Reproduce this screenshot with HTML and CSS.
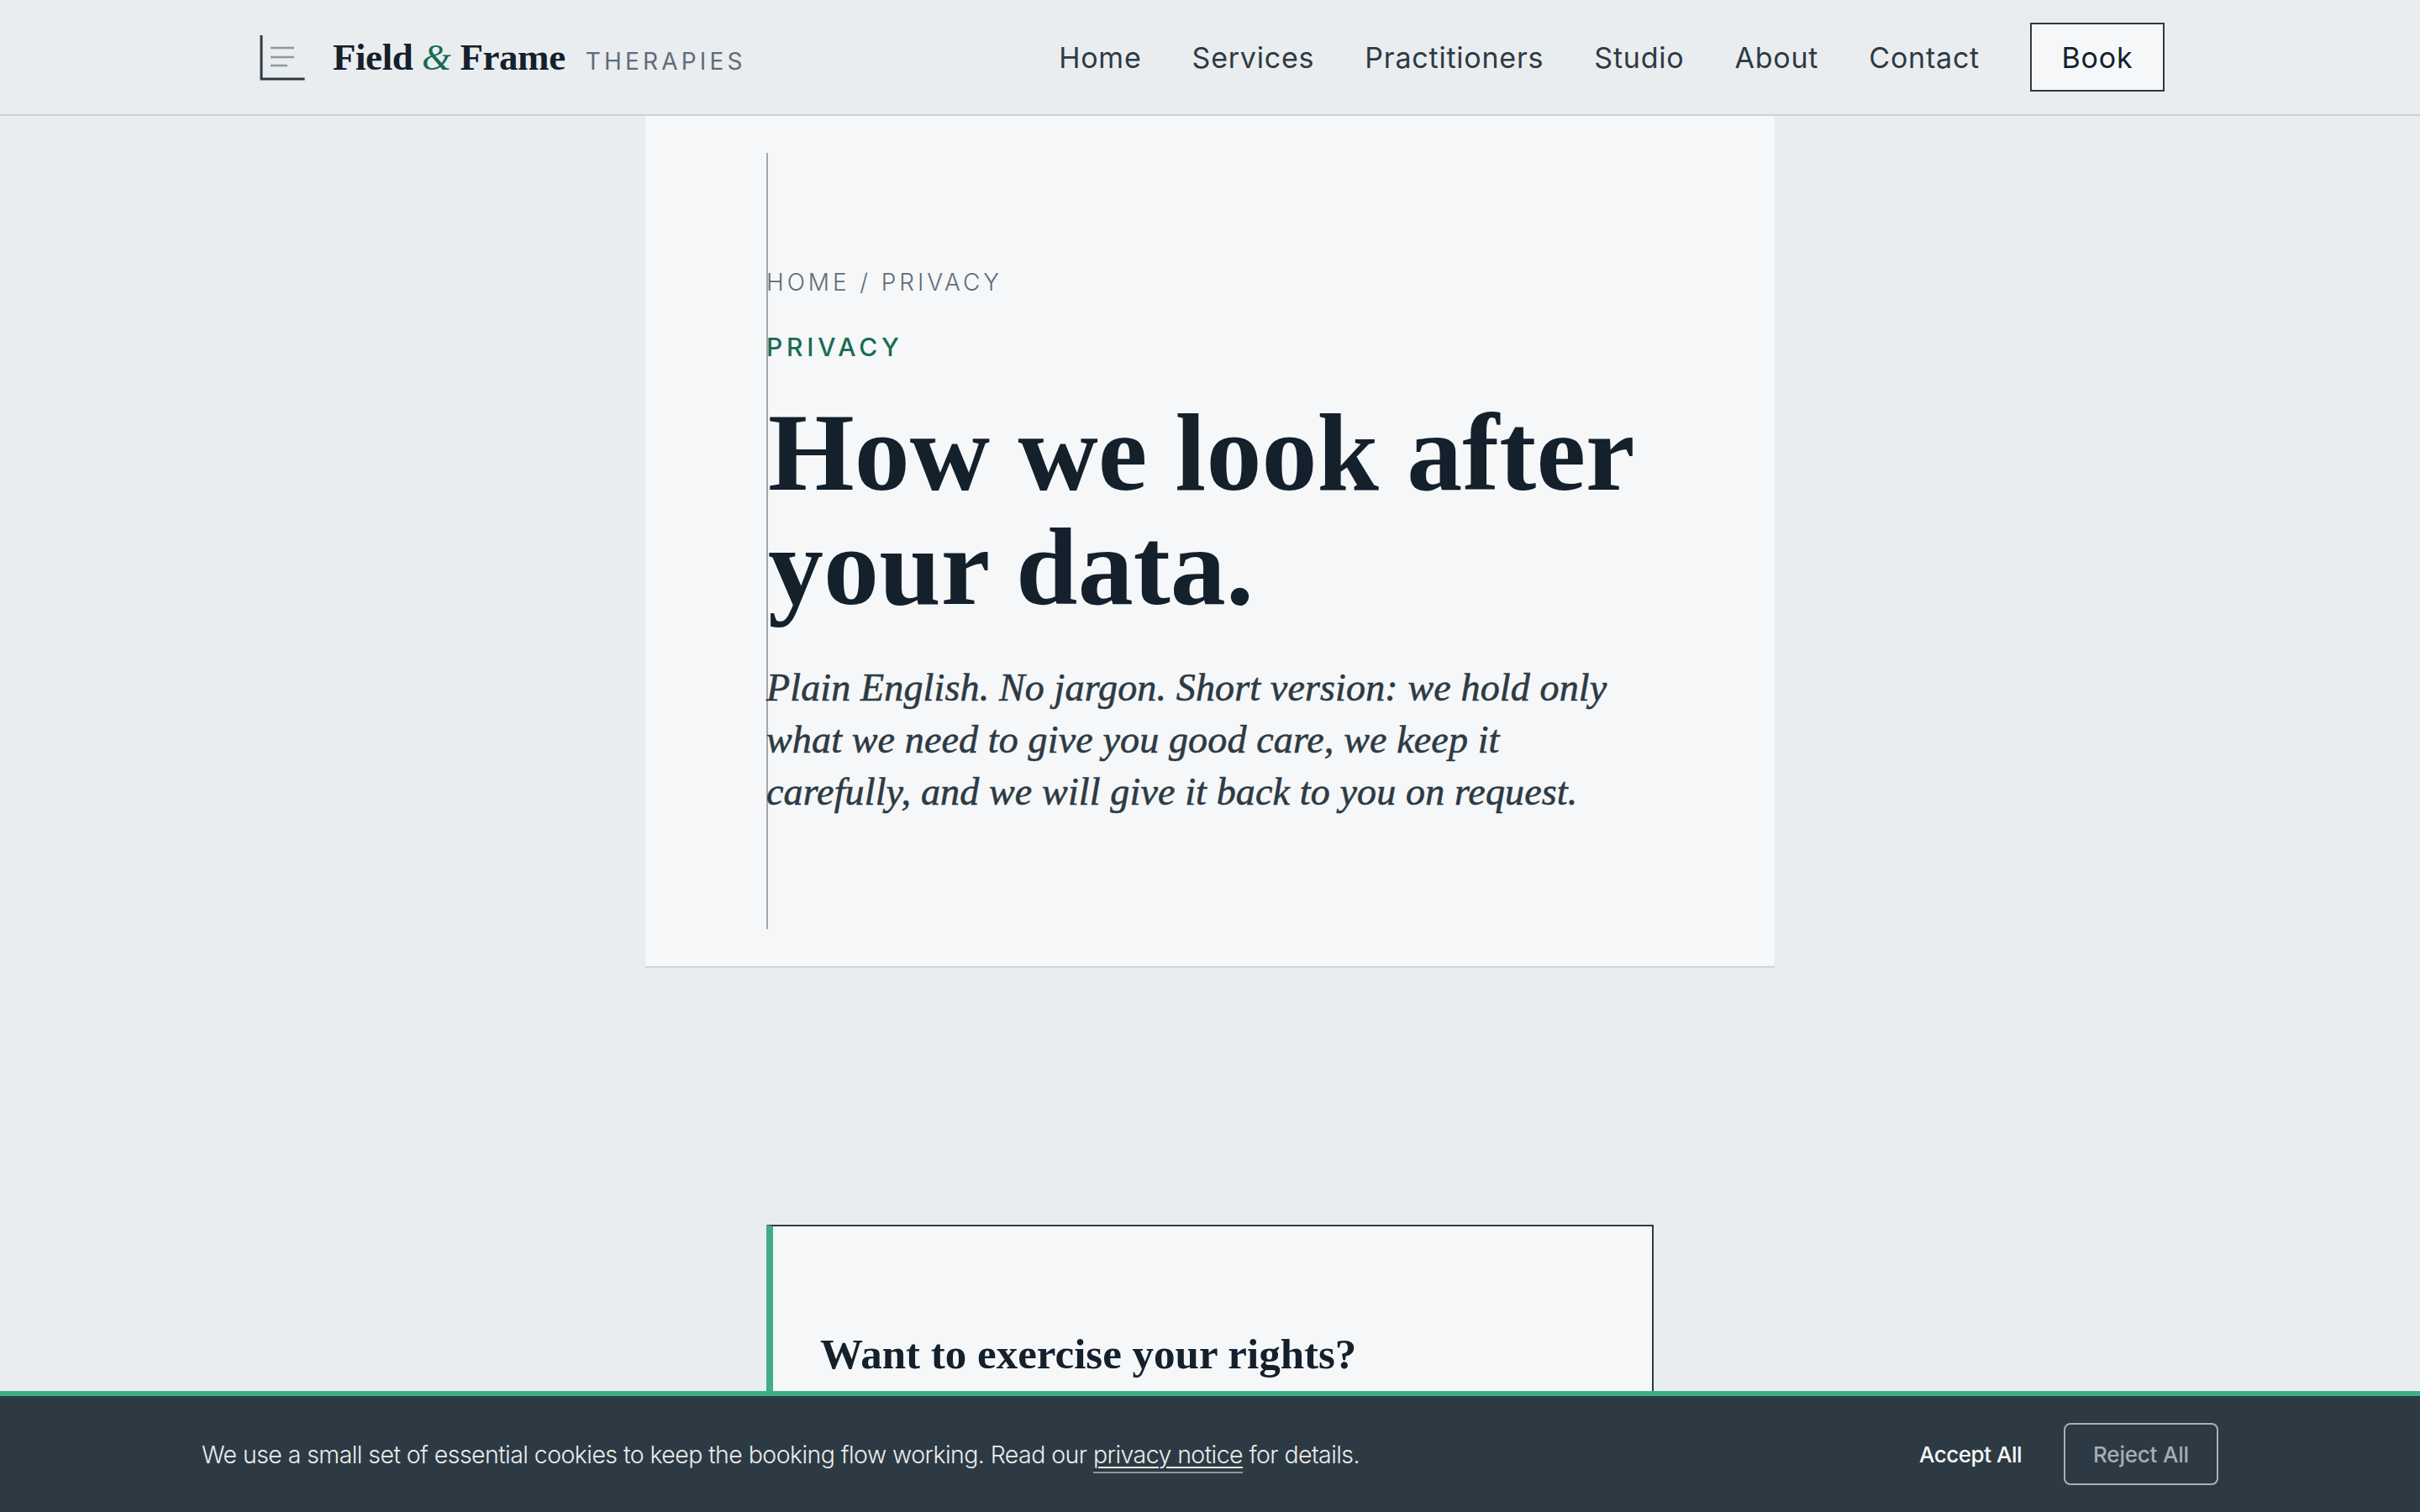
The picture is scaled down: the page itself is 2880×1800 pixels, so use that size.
FILE: index.html
```html
<!DOCTYPE html>
<html lang="en">
<head>
<meta charset="utf-8">
<title>Privacy — Field &amp; Frame Therapies</title>
<link rel="stylesheet" href="styles.css">
</head>
<body>
<header class="site-header">
  <div class="header-inner">
    <a class="brand" href="#">
      <svg class="brand-mark" viewBox="0 0 32 32" aria-hidden="true">
        <path class="mark-frame" d="M3.5 3V29H29.3"/>
        <path class="mark-lines" d="M9 10.5H23M9 16H23M9 21H19"/>
      </svg>
      <span class="brand-name">Field <em>&amp;</em> Frame</span>
      <span class="brand-sub">THERAPIES</span>
    </a>
    <nav class="nav">
      <a href="#">Home</a>
      <a href="#">Services</a>
      <a href="#">Practitioners</a>
      <a href="#">Studio</a>
      <a href="#">About</a>
      <a href="#">Contact</a>
      <a class="book" href="#">Book</a>
    </nav>
  </div>
</header>
<main>
  <section class="hero">
    <div class="hero-inner">
      <p class="crumbs">HOME / PRIVACY</p>
      <p class="eyebrow">PRIVACY</p>
      <h1>How we look after your data.</h1>
      <p class="lede">Plain English. No jargon. Short version: we hold only what we need to give you good care, we keep it carefully, and we will give it back to you on request.</p>
    </div>
  </section>
  <aside class="callout">
    <h2>Want to exercise your rights?</h2>
  </aside>
</main>
<div class="cookie">
  <p>We use a small set of essential cookies to keep the booking flow working. Read our <a href="#">privacy notice</a> for details.</p>
  <div class="cookie-actions">
    <button class="accept" type="button">Accept All</button>
    <button class="reject" type="button">Reject All</button>
  </div>
</div>
</body>
</html>
```
FILE: styles.css
```css
* { box-sizing: border-box; }
html, body { height: 100%; overflow: hidden; }
body {
  margin: 0;
  background: #e9edf0;
  color: #14202b;
  font-family: "Inter", "Liberation Sans", sans-serif;
}
a { color: inherit; text-decoration: none; }
p, h1, h2 { margin: 0; }

.site-header {
  height: 138px;
  border-bottom: 2px solid #ccd1d5;
}
.header-inner {
  width: 2272px;
  height: 136px;
  margin: 0 auto;
  display: flex;
  align-items: center;
  justify-content: space-between;
}
.brand { display: flex; align-items: center; }
.brand-mark { width: 64px; height: 64px; margin-right: 28px; fill: none; }
.mark-frame { stroke: #2d3a43; stroke-width: 1.5; }
.mark-lines { stroke: #8f989e; stroke-width: 1.25; }
.brand-name {
  font-family: "Liberation Serif", serif;
  font-weight: 700;
  font-size: 45px;
  letter-spacing: -0.44px;
  color: #14202b;
  margin-right: 24px;
}
.brand-name em { color: #1a6b50; font-weight: 400; }
.brand-sub {
  font-size: 28px;
  letter-spacing: 0.15em;
  color: #5f6c78;
  position: relative;
  top: 5px;
}
.nav {
  display: flex;
  align-items: center;
  gap: 60px;
  font-size: 34px;
  font-weight: 400;
  letter-spacing: 0.023em;
  color: #2d3a43;
}
.book {
  width: 160px;
  height: 82px;
  display: flex;
  align-items: center;
  justify-content: center;
  border: 2px solid #2d3a43;
  background: #f5f7f9;
  color: #14202b;
}

.hero {
  width: 1344px;
  height: 1014px;
  margin: 0 auto;
  padding: 44px 0 44px 144px;
  background: #f5f7f9;
  border-bottom: 2px solid #d1d5d8;
}
.hero-inner {
  height: 924px;
  width: 1058px;
  border-left: 2px solid #a3a8ad;
  padding-top: 134px;
}
.crumbs, .eyebrow, .lede { margin-left: -2px; }
.crumbs {
  font-size: 28px;
  line-height: 40px;
  letter-spacing: 0.14em;
  font-weight: 300;
  color: #5f6c78;
}
.eyebrow {
  margin-top: 37px;
  font-size: 30px;
  line-height: 40px;
  letter-spacing: 0.16em;
  font-weight: 500;
  color: #1a6b50;
}
h1 {
  margin-top: 38px;
  font-family: "Liberation Serif", serif;
  font-weight: 700;
  font-size: 132px;
  line-height: 136px;
  letter-spacing: 0.1px;
  color: #14202b;
}
.lede {
  margin-top: 45px;
  width: 1010px;
  font-family: "Liberation Serif", serif;
  font-style: italic;
  font-size: 46px;
  line-height: 62px;
  letter-spacing: 0.15px;
  -webkit-text-stroke: 0.6px #2d3a43;
  color: #2d3a43;
}

.callout {
  width: 1056px;
  height: 400px;
  margin: 306px auto 0;
  padding: 120px 56px 0;
  background: #f5f7f9;
  border: 2px solid #2d3a43;
  border-left: 8px solid #3fae88;
}
h2 {
  font-family: "Liberation Serif", serif;
  font-weight: 700;
  font-size: 51px;
  line-height: 64px;
  color: #14202b;
}

.cookie {
  position: fixed;
  left: 0;
  right: 0;
  bottom: 0;
  height: 144px;
  display: flex;
  align-items: center;
  justify-content: space-between;
  padding: 0 240px;
  background: #2d3a43;
  border-top: 6px solid #3fae88;
  color: #e9edf0;
  font-size: 28.5px;
  font-weight: 300;
  letter-spacing: -0.57px;
}
.cookie a {
  text-decoration: underline;
  text-underline-offset: 4px;
  text-decoration-thickness: 2px;
  padding-bottom: 3px;
  border-bottom: 2px solid #8e979d;
}
.cookie-actions { display: flex; align-items: center; gap: 50px; }
button {
  font-family: "Inter", "Liberation Sans", sans-serif;
  font-size: 26px;
  font-weight: 500;
  letter-spacing: -0.5px;
  background: none;
  border: 0;
  padding: 0;
}
.accept { color: #f5f7f9; }
.reject {
  width: 184px;
  height: 74px;
  border: 2px solid #a5b1b9;
  border-radius: 8px;
  letter-spacing: -0.2px;
  color: #a3aeb5;
}
```
